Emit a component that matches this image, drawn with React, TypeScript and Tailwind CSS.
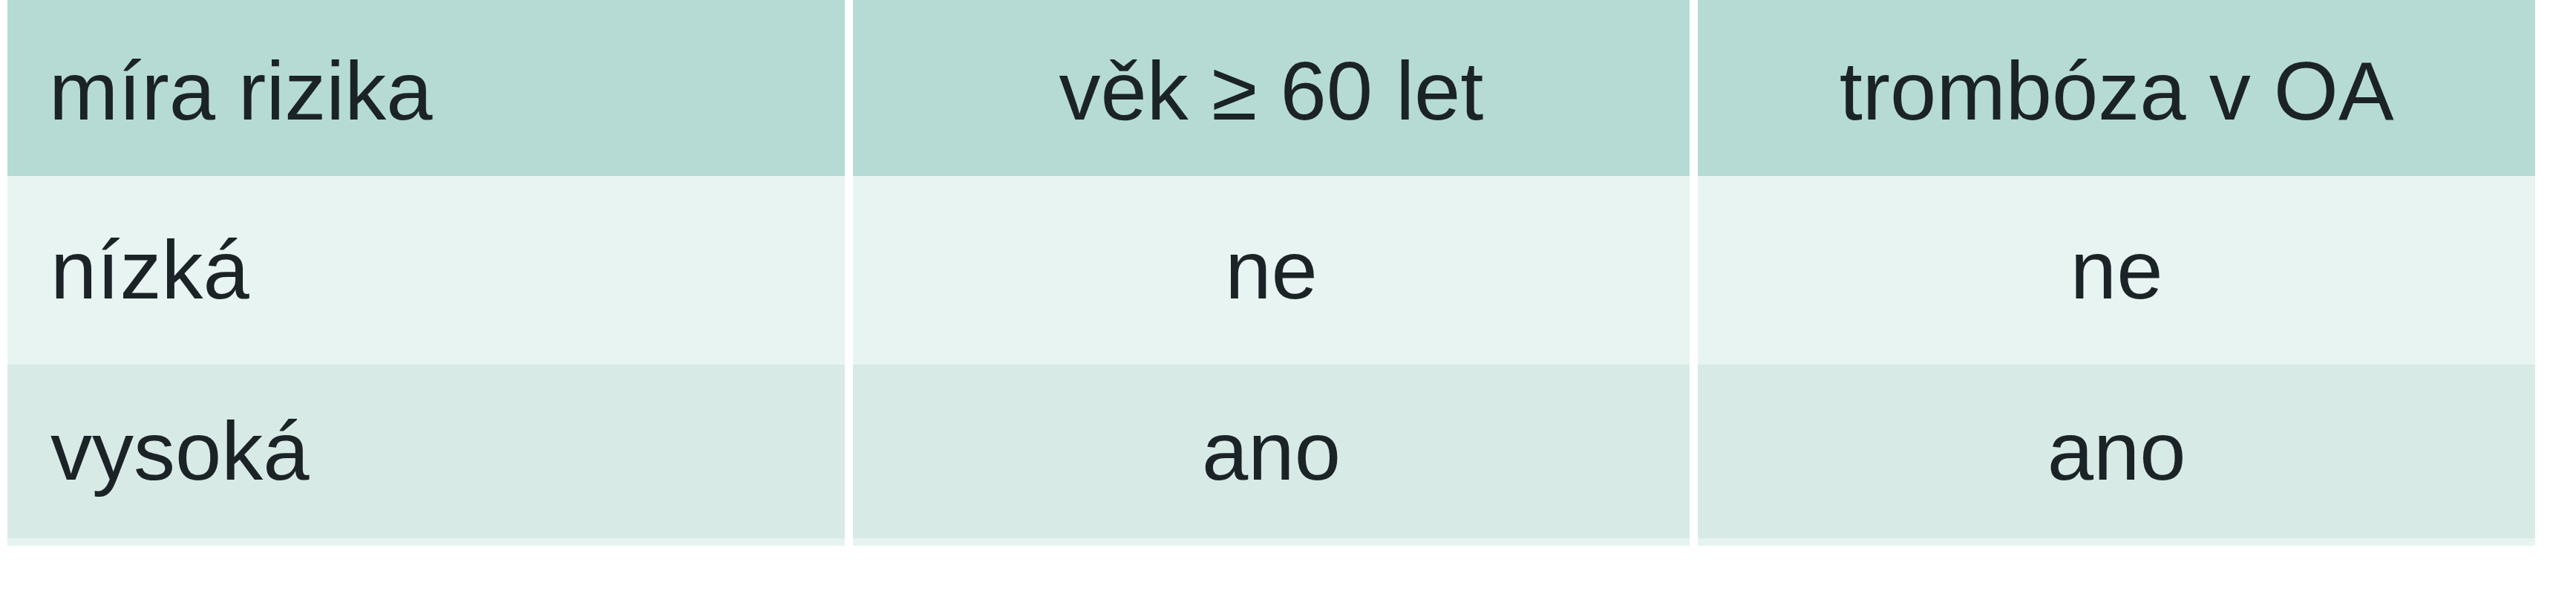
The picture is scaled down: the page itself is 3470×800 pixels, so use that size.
import * as React from 'react';

type Row = { label: string; age: string; thrombosis: string; bg: string };

const rows: Row[] = [
    { label: 'nízká', age: 'ne', thrombosis: 'ne', bg: 'bg-[#e7f4f1]' },
    { label: 'vysoká', age: 'ano', thrombosis: 'ano', bg: 'bg-[#d7eae6]' },
];

export default function App() {
    return (
        <div className="h-[800px] w-[3470px] bg-white font-['Liberation_Sans',Arial,sans-serif] text-[112px] leading-none text-[#1b2326]">
            <div className="ml-[10px] grid w-[3405px] grid-cols-3 gap-x-[11px]">
                {/* header */}
                <div className="flex h-[237px] items-center bg-[#b6dbd5] pl-[56px] pt-[8px]">míra rizika</div>
                <div className="flex h-[237px] items-center justify-center bg-[#b6dbd5] pt-[8px]">věk ≥ 60 let</div>
                <div className="flex h-[237px] items-center justify-center bg-[#b6dbd5] pt-[8px]">trombóza v OA</div>

                {rows.map((r, i) => (
                    <React.Fragment key={r.label}>
                        <div className={['flex items-center pl-[58px]', i === 0 ? 'h-[254px]' : 'h-[244px] border-b-[10px] border-[#e6f3f1]', r.bg].join(' ')}>{r.label}</div>
                        <div className={['flex items-center justify-center', i === 0 ? 'h-[254px]' : 'h-[244px] border-b-[10px] border-[#e6f3f1]', r.bg].join(' ')}>{r.age}</div>
                        <div className={['flex items-center justify-center', i === 0 ? 'h-[254px]' : 'h-[244px] border-b-[10px] border-[#e6f3f1]', r.bg].join(' ')}>{r.thrombosis}</div>
                    </React.Fragment>
                ))}
            </div>
        </div>
    );
}
